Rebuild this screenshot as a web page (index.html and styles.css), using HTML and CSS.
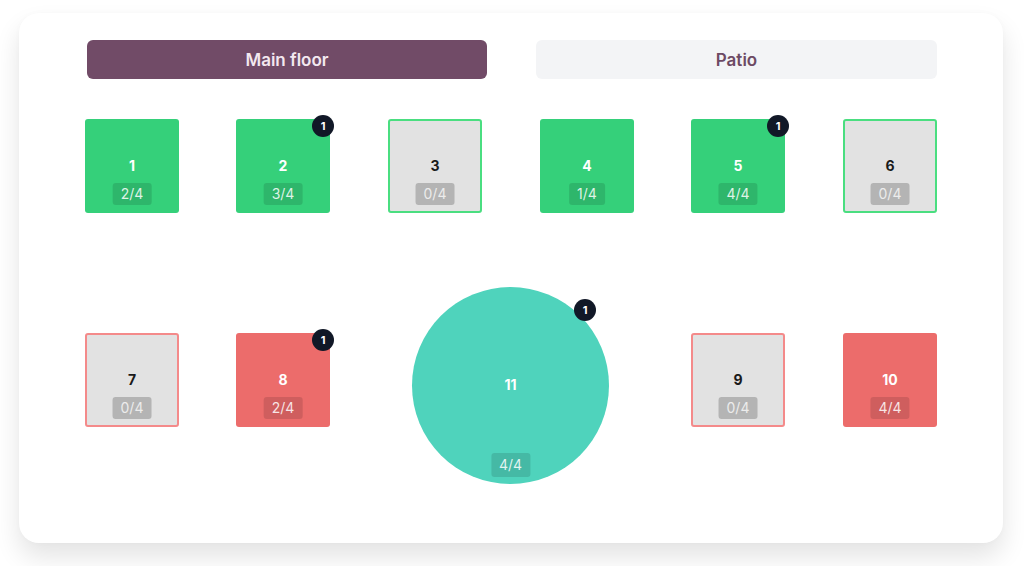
FILE: index.html
```html
<!DOCTYPE html>
<html lang="en">

<head>
  <meta charset="UTF-8">
  <meta name="viewport" content="width=device-width, initial-scale=1.0">
  <title>Floor Plan</title>
  <link rel="stylesheet" href="styles.css">
</head>

<body>
  <div class="card">
    <div class="floor-tabs">
      <div class="floor-tab active">Main floor</div>
      <div class="floor-tab">Patio</div>
    </div>

    <div class="floor">
      <!-- Row 1 -->
      <div class="table busy" style="left: 66px; top: 40px;">
        <span class="table-name">1</span>
        <span class="seats">2/4</span>
      </div>
      <div class="table busy" style="left: 217px; top: 40px;">
        <span class="table-name">2</span>
        <span class="seats">3/4</span>
        <span class="notify">1</span>
      </div>
      <div class="table free free-green" style="left: 369px; top: 40px;">
        <span class="table-name">3</span>
        <span class="seats">0/4</span>
      </div>
      <div class="table busy" style="left: 521px; top: 40px;">
        <span class="table-name">4</span>
        <span class="seats">1/4</span>
      </div>
      <div class="table busy" style="left: 672px; top: 40px;">
        <span class="table-name">5</span>
        <span class="seats">4/4</span>
        <span class="notify">1</span>
      </div>
      <div class="table free free-green" style="left: 824px; top: 40px;">
        <span class="table-name">6</span>
        <span class="seats">0/4</span>
      </div>

      <!-- Row 2 -->
      <div class="table free free-red" style="left: 66px; top: 254px;">
        <span class="table-name">7</span>
        <span class="seats">0/4</span>
      </div>
      <div class="table late" style="left: 217px; top: 254px;">
        <span class="table-name">8</span>
        <span class="seats">2/4</span>
        <span class="notify">1</span>
      </div>
      <div class="table round" style="left: 393px; top: 208px;">
        <span class="table-name">11</span>
        <span class="seats">4/4</span>
        <span class="notify">1</span>
      </div>
      <div class="table free free-red" style="left: 672px; top: 254px;">
        <span class="table-name">9</span>
        <span class="seats">0/4</span>
      </div>
      <div class="table late" style="left: 824px; top: 254px;">
        <span class="table-name">10</span>
        <span class="seats">4/4</span>
      </div>
    </div>
  </div>
</body>

</html>
```

FILE: styles.css
```css
html,
body {
  height: 100%;
}

body {
  margin: 0;
  background-color: #fff;
  font-family: Inter, 'Noto Sans', sans-serif;
  color: #1f1f1f;
  padding-top: 13px;
  box-sizing: border-box;
  overflow: hidden;
}

.card {
  margin: 0 21px 0 19px;
  height: 530px;
  background-color: #fff;
  border-radius: 20px;
  box-shadow: 0 14px 26px rgba(0, 0, 0, 0.11), 0 0 6px rgba(0, 0, 0, 0.02);
  box-sizing: border-box;
  padding-top: 27px;
}

.floor-tabs {
  display: grid;
  grid-template-columns: 400px 401px;
  gap: 49px;
  padding-left: 68px;
}

.floor-tab {
  height: 39px;
  border-radius: 6px;
  background-color: #f3f4f6;
  color: #6d4a64;
  font-size: 17px;
  font-weight: 600;
  display: flex;
  align-items: center;
  justify-content: center;
}

.floor-tab.active {
  background-color: #714b67;
  color: #f3e8ef;
}

.floor {
  position: relative;
  height: 464px;
}

.table {
  position: absolute;
  width: 94px;
  height: 94px;
  box-sizing: border-box;
  border-radius: 3px;
  display: flex;
  align-items: center;
  justify-content: center;
}

.table-name {
  font-size: 14px;
  font-weight: 700;
  color: #fff;
  margin-top: -2px;
}

.seats {
  position: absolute;
  bottom: 8px;
  left: 50%;
  transform: translateX(-50%);
  padding: 0 8px;
  height: 22px;
  line-height: 22px;
  border-radius: 3px;
  font-size: 14px;
  color: rgba(255, 255, 255, 0.85);
  background-color: rgba(0, 0, 0, 0.12);
}

.notify {
  position: absolute;
  top: -4px;
  right: -4px;
  width: 22px;
  height: 22px;
  border-radius: 50%;
  background-color: #111827;
  color: #fff;
  font-size: 11px;
  font-weight: 700;
  display: flex;
  align-items: center;
  justify-content: center;
}

.busy {
  background-color: #35d07a;
}

.late {
  background-color: #ec6c6b;
}

.free {
  background-color: #e2e2e2;
  border: 2px solid #4ade80;
}

.free-red {
  border-color: #f48a8a;
}

.free .table-name {
  color: #1a1a1a;
}

.free .seats {
  background-color: #b4b4b4;
  color: #ececec;
  bottom: 6px;
}

.round {
  width: 197px;
  height: 197px;
  border-radius: 50%;
  background-color: #4fd3bc;
}

.round .seats {
  bottom: 7px;
  height: 24px;
  line-height: 24px;
}

.round .notify {
  top: 12px;
  right: 13px;
}
```
